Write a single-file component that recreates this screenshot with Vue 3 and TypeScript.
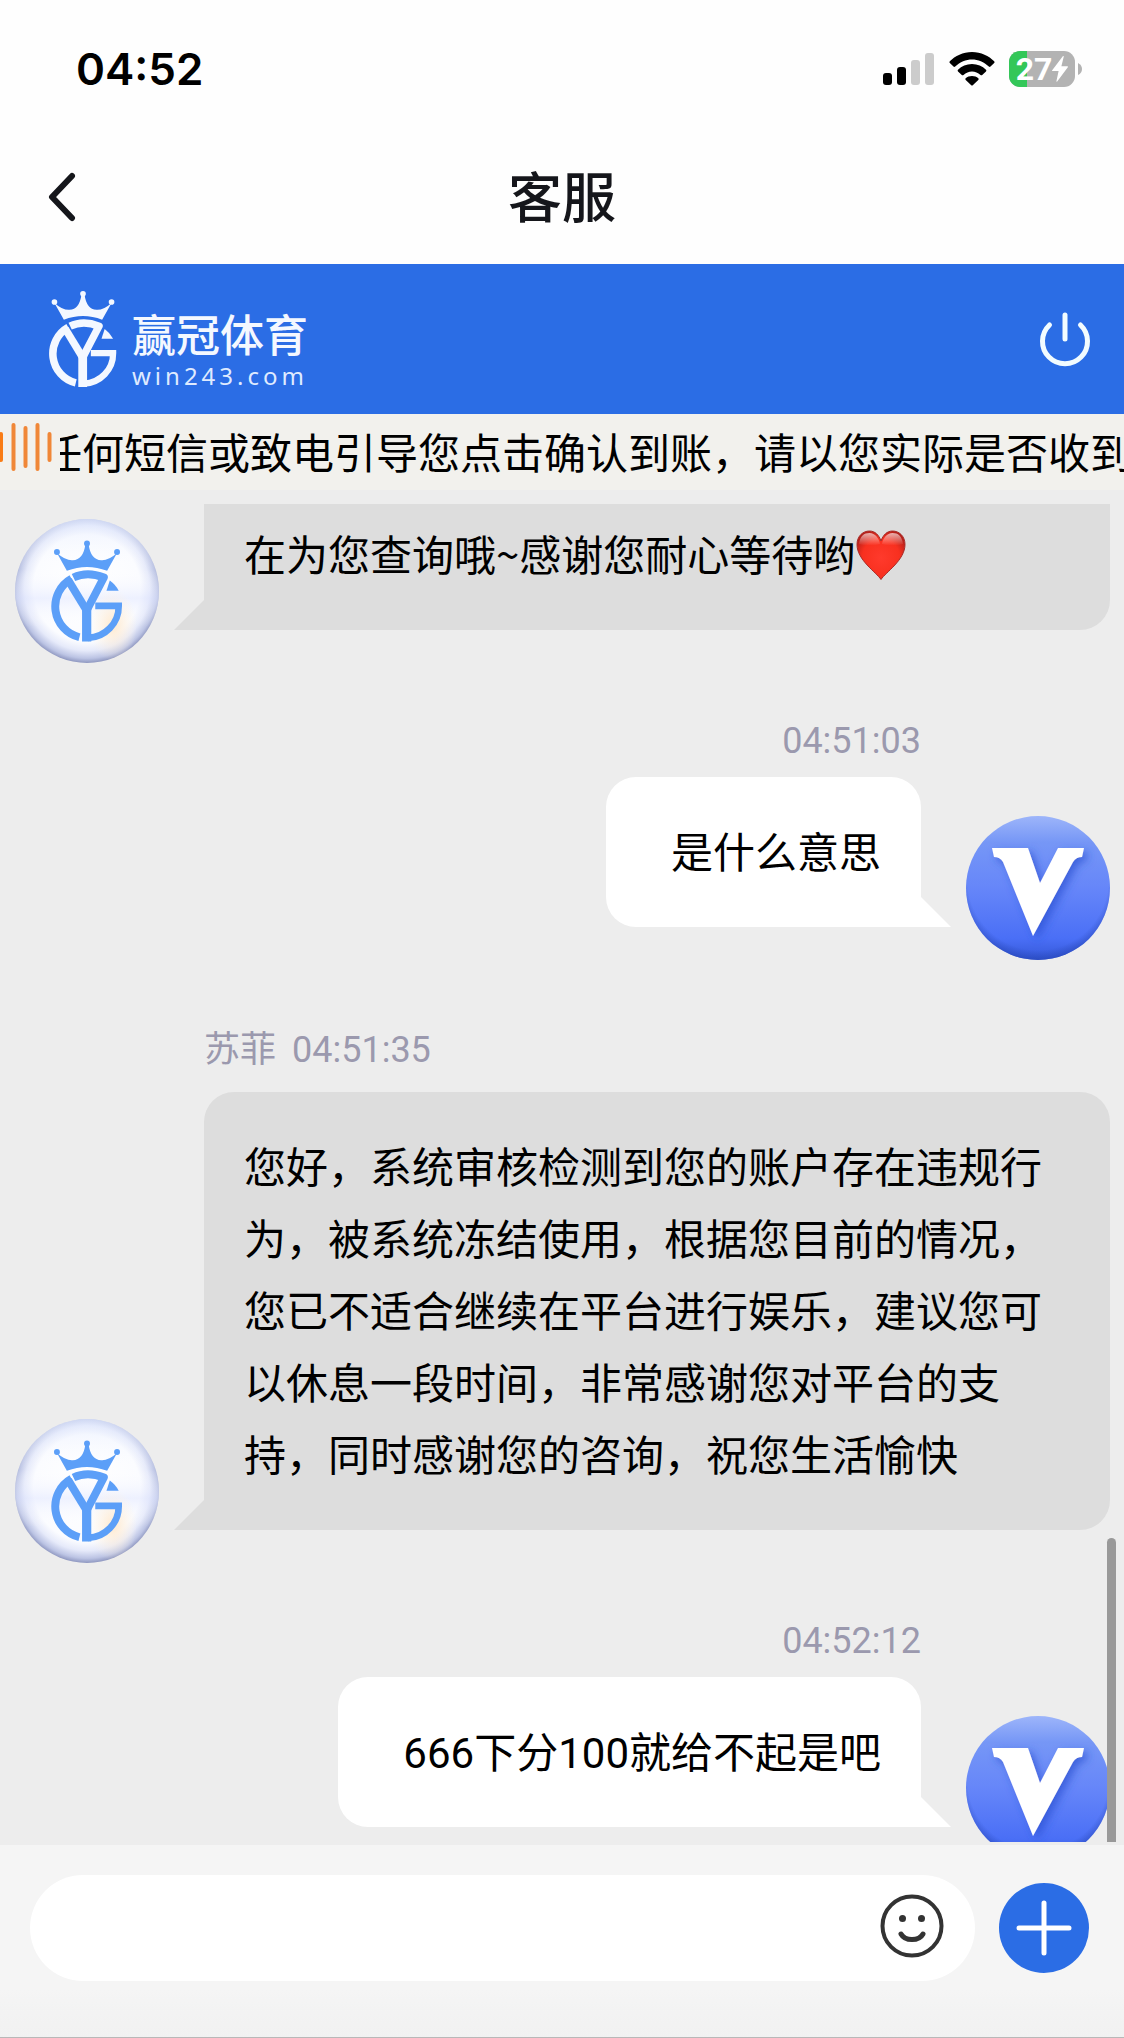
<script setup lang="ts">
import { ref } from 'vue'

interface Message {
  id: number
  from: 'agent' | 'me'
  name?: string
  time?: string
  text: string
  heart?: boolean
  continued?: boolean
}

const battery = 27
const draft = ref('')
const notice = '任何短信或致电引导您点击确认到账，请以您实际是否收到'

const messages: Message[] = [
  { id: 1, from: 'agent', text: '在为您查询哦~感谢您耐心等待哟', heart: true, continued: true },
  { id: 2, from: 'me', time: '04:51:03', text: '是什么意思' },
  {
    id: 3,
    from: 'agent',
    name: '苏菲',
    time: '04:51:35',
    text: '您好，系统审核检测到您的账户存在违规行为，被系统冻结使用，根据您目前的情况，您已不适合继续在平台进行娱乐，建议您可以休息一段时间，非常感谢您对平台的支持，同时感谢您的咨询，祝您生活愉快',
  },
  { id: 4, from: 'me', time: '04:52:12', text: '666下分100就给不起是吧' },
]
</script>

<template>
  <div class="app">
    <!-- Shared drawings -->
    <svg class="defs" aria-hidden="true">
      <symbol id="emblem" viewBox="0 0 218 306">
        <g fill="currentColor">
          <circle cx="18" cy="35" r="9" />
          <circle cx="109" cy="9" r="9" />
          <circle cx="200" cy="35" r="9" />
          <path d="M18 38Q45 62 66 60Q98 58 104 12H114Q120 58 152 60Q173 62 200 38L170 92Q109 68 48 92Z" />
          <path d="M178 121Q196 134 205 152H168Z" />
          <path d="M94 198H122V306H94Z" />
        </g>
        <g fill="none" stroke="currentColor" stroke-width="24">
          <path d="M62 116A96 96 0 0 0 86 293" />
          <path d="M112 295A96 96 0 0 0 205 198H134" stroke-width="20" />
          <path d="M52 120L108 212" />
          <path d="M68 112Q110 92 160 112L108 212" stroke-linejoin="round" />
        </g>
      </symbol>
    </svg>

    <header class="top">
      <div class="status">
        <time class="clock">04:52</time>
        <div class="status-icons">
          <svg width="52" height="36" viewBox="0 0 52 36" aria-hidden="true">
            <rect x="0" y="22" width="9" height="12" rx="3" />
            <rect x="14" y="16" width="9" height="18" rx="3" />
            <rect x="28" y="9" width="9" height="25" rx="3" fill="#ccc" />
            <rect x="42" y="2" width="9" height="32" rx="3" fill="#ccc" />
          </svg>
          <svg class="wifi" width="46" height="36" viewBox="0 0 46 36" aria-hidden="true">
            <path d="M23 1C14 1 6 5 .8 10.300Q0 11.200.8 12L4.500 15.600Q5.300 16.300 6.200 15.500C11 11 17 8.500 23 8.500S35 11 39.800 15.500Q40.700 16.300 41.500 15.600L45.200 12Q46 11.200 45.200 10.300C40 5 32 1 23 1Z" />
            <path d="M23 13C17.500 13 12.600 15.200 9 18.700Q8.200 19.500 9 20.400L12.800 24Q13.600 24.700 14.500 24C17 21.800 19.800 20.600 23 20.600S29 21.800 31.500 24Q32.400 24.700 33.200 24L37 20.400Q37.800 19.500 37 18.700C33.400 15.200 28.500 13 23 13Z" />
            <path d="M23 25C20.500 25 18.300 25.800 16.700 27.200Q15.800 28 16.700 28.900L22 34Q23 35 24 34L29.300 28.900Q30.200 28 29.300 27.200C27.700 25.800 25.500 25 23 25Z" />
          </svg>
          <div class="battery">
            <div class="battery-body">
              <div class="battery-fill" :style="{ width: battery + '%' }"></div>
              <span class="battery-text">{{ battery }}</span>
              <svg width="16" height="26" viewBox="0 0 16 26" aria-hidden="true">
                <path d="M11 0L0 14.500Q0 15 .6 15H6.600L4.400 25.300Q4.600 26 5.200 25.500L16 11Q16 10.300 15.400 10.300H9.400L11.800.6Q11.600-.2 11 0Z" fill="#fff" />
              </svg>
            </div>
            <svg width="4" height="12" viewBox="0 0 4 12" aria-hidden="true">
              <path d="M0 0Q4 2 4 6T0 12Z" fill="#b3b3b3" />
            </svg>
          </div>
        </div>
      </div>
      <nav class="nav">
        <button class="icon-button back" type="button" aria-label="返回">
          <svg width="30" height="50" viewBox="0 0 30 50" fill="none" stroke="#15161b" stroke-width="6" stroke-linecap="round" stroke-linejoin="round">
            <path d="M25 4L5 25L25 46" />
          </svg>
        </button>
        <h1 class="title">客服</h1>
      </nav>
    </header>

    <section class="brand">
      <a class="logo" href="#">
        <svg class="logo-mark" aria-hidden="true"><use href="#emblem" /></svg>
        <span class="logo-words">
          <span class="logo-name">赢冠体育</span>
          <span class="logo-domain">win243.com</span>
        </span>
      </a>
      <button class="icon-button" type="button" aria-label="退出">
        <svg width="52" height="56" viewBox="0 0 52 56" fill="none" stroke="#f2fcff" stroke-width="5" stroke-linecap="round">
          <path d="M26 4V28" />
          <path d="M10.500 14A22.500 22.500 0 1 0 41.500 14" />
        </svg>
      </button>
    </section>

    <div class="notice">
      <svg width="52" height="52" viewBox="0 0 52 52" fill="none" stroke="#f08738" stroke-width="4" stroke-linecap="round" aria-hidden="true">
        <path d="M1 14V40" stroke="#f97c16" />
        <path d="M13.500 5V49M25.500 8V46M37.500 5V49M49.500 14V40" />
      </svg>
      <p class="notice-text">{{ notice }}</p>
    </div>

    <main class="chat">
      <div class="list">
        <article
          v-for="m in messages"
          :key="m.id"
          class="message"
          :class="['message--' + m.from, { 'message--continued': m.continued }]"
        >
          <svg v-if="m.from === 'agent'" class="avatar avatar--agent" viewBox="0 0 144 144" role="img" aria-label="客服头像">
            <defs>
              <radialGradient id="pearl" cx="0.500" cy="0.480" r="0.530">
                <stop offset="0" stop-color="#fff" />
                <stop offset="0.700" stop-color="#fbfcff" />
                <stop offset="0.820" stop-color="#e6eafa" />
                <stop offset="0.920" stop-color="#bcc4e4" />
                <stop offset="1" stop-color="#7f88b4" />
              </radialGradient>
              <linearGradient id="pearl-top" x1="0" y1="0" x2="0" y2="1">
                <stop offset="0" stop-color="#dce6ff" stop-opacity="0.500" />
                <stop offset="0.350" stop-color="#fff" stop-opacity="0" />
                <stop offset="0.550" stop-color="#dfe5ff" stop-opacity="0.500" />
                <stop offset="0.750" stop-color="#fff" stop-opacity="0" />
              </linearGradient>
              <radialGradient id="pearl-warm">
                <stop offset="0" stop-color="#ffe9cf" />
                <stop offset="1" stop-color="#fff3e2" stop-opacity="0" />
              </radialGradient>
            </defs>
            <circle cx="72" cy="72" r="72" fill="url(#pearl)" />
            <circle cx="72" cy="72" r="72" fill="url(#pearl-top)" />
            <ellipse cx="98" cy="106" rx="24" ry="36" fill="url(#pearl-warm)" />
            <use href="#emblem" x="36" y="21" width="72" height="102" />
          </svg>

          <div class="content">
            <p v-if="m.time" class="meta">
              <span v-if="m.name">{{ m.name }}</span>
              <time>{{ m.time }}</time>
            </p>
            <div class="bubble">
              <p class="bubble-text">
                {{ m.text }}<svg v-if="m.heart" class="heart" viewBox="0 0 52 52" role="img" aria-label="爱心">
                  <defs>
                    <radialGradient id="heart-red" cx="0.500" cy="0.550" r="0.600">
                      <stop offset="0" stop-color="#ff3a2c" />
                      <stop offset="0.650" stop-color="#f8301f" />
                      <stop offset="1" stop-color="#b5201a" />
                    </radialGradient>
                    <linearGradient id="heart-shine" x1="0" y1="0" x2="0" y2="1">
                      <stop offset="0" stop-color="#fff" stop-opacity="0.650" />
                      <stop offset="1" stop-color="#fff" stop-opacity="0" />
                    </linearGradient>
                  </defs>
                  <path d="M26 50.500C21 43 2 31 2 15.500C2 7 8 2 14.500 2C20 2 24 6 26 12C28 6 32 2 37.500 2C44 2 50 7 50 15.500C50 31 31 43 26 50.500Z" fill="url(#heart-red)" stroke="#a92a26" stroke-width="1" />
                  <path d="M4 15C5 7 9 4 14.500 4S24 9 25 15Q14 18 4 15ZM27 15C28 9 32 4 37.500 4S47 7 48 15Q38 18 27 15Z" fill="url(#heart-shine)" />
                </svg>
              </p>
            </div>
          </div>

          <svg v-if="m.from === 'me'" class="avatar" viewBox="0 0 144 144" role="img" aria-label="我的头像">
            <defs>
              <linearGradient id="badge" x1="0" y1="0" x2="0" y2="1">
                <stop offset="0" stop-color="#9db5fa" />
                <stop offset="0.180" stop-color="#7697f6" />
                <stop offset="0.500" stop-color="#6686f9" />
                <stop offset="0.850" stop-color="#4a6ff6" />
                <stop offset="1" stop-color="#3457d8" />
              </linearGradient>
              <radialGradient id="badge-rim" cx="0.500" cy="0.440" r="0.570">
                <stop offset="0.860" stop-color="#2a49b8" stop-opacity="0" />
                <stop offset="1" stop-color="#2444b4" stop-opacity="0.700" />
              </radialGradient>
              <filter id="badge-shadow" x="-30%" y="-30%" width="160%" height="160%">
                <feDropShadow dx="4" dy="4" stdDeviation="4" flood-color="#2b4fd0" flood-opacity="0.700" />
              </filter>
            </defs>
            <circle cx="72" cy="72" r="72" fill="url(#badge)" />
            <circle cx="72" cy="72" r="72" fill="url(#badge-rim)" />
            <path d="M26 32H62L74 67L92 32H118L116 41Q110 41 107 46L67 120L37 46Q34 41 28 41Z" fill="#fff" filter="url(#badge-shadow)" />
          </svg>
        </article>
      </div>
      <div class="scroll-thumb"></div>
    </main>

    <form class="composer" @submit.prevent>
      <div class="field">
        <input v-model="draft" class="field-input" type="text" aria-label="输入消息" />
        <button class="icon-button" type="button" aria-label="表情">
          <svg width="64" height="64" viewBox="0 0 64 64" fill="none" stroke="#333" stroke-width="4" stroke-linecap="round">
            <circle cx="32" cy="32" r="29.500" />
            <path d="M21 40Q24 45.500 32 45.500T43 40" stroke-width="5" />
            <circle cx="22.500" cy="24.500" r="3.500" fill="#333" stroke="none" />
            <circle cx="41.500" cy="24.500" r="3.500" fill="#333" stroke="none" />
          </svg>
        </button>
      </div>
      <button class="plus" type="button" aria-label="更多">
        <svg width="56" height="56" viewBox="0 0 56 56" fill="none" stroke="#fff" stroke-width="5" stroke-linecap="round">
          <path d="M28 3V53M3 28H53" />
        </svg>
      </button>
    </form>
  </div>
</template>

<style>
body {
  margin: 0;
}
</style>

<style scoped>
.app {
  display: flex;
  flex-direction: column;
  height: 100vh;
  overflow: hidden;
  background: #ededed;
  color: #000;
  font-family: Roboto, "Noto Sans CJK SC", sans-serif;
}

p,
h1 {
  margin: 0;
}

svg {
  display: block;
  flex: none;
}

.defs {
  position: absolute;
  width: 0;
  height: 0;
}

.icon-button {
  display: flex;
  padding: 0;
  border: 0;
  background: none;
}

.top {
  flex: none;
  background: #fefefe;
}

.status {
  display: flex;
  align-items: center;
  justify-content: space-between;
  height: 138px;
  padding: 0 42px 0 76px;
}

.clock {
  font-family: Inter, sans-serif;
  font-size: 44px;
  font-weight: 600;
}

.status-icons {
  display: flex;
  align-items: center;
  gap: 14px;
}

.battery {
  display: flex;
  align-items: center;
  gap: 3px;
}

.battery-body {
  position: relative;
  display: flex;
  align-items: center;
  justify-content: center;
  width: 66px;
  height: 36px;
  border-radius: 11px;
  background: #b3b3b3;
  overflow: hidden;
}

.battery-fill {
  position: absolute;
  inset: 0 auto 0 0;
  background: #34c759;
}

.battery-text {
  position: relative;
  color: #fff;
  font-size: 32px;
  font-weight: 700;
  line-height: 36px;
}

.battery-body svg {
  position: relative;
}

.nav {
  display: grid;
  grid-template-columns: 1fr auto 1fr;
  align-items: center;
  height: 118px;
  padding: 0 47px 8px;
}

.title {
  padding-top: 6px;
  font-size: 54px;
  font-weight: 500;
  line-height: 78px;
  color: #15161b;
}

.brand {
  display: flex;
  flex: none;
  align-items: center;
  justify-content: space-between;
  height: 150px;
  padding: 0 33px 0 48px;
  background: #2b6de5;
}

.logo {
  display: flex;
  align-items: center;
  gap: 14px;
  color: #f4f8ff;
  text-decoration: none;
}

.logo-mark {
  width: 70px;
  height: 96px;
}

.logo-words {
  display: flex;
  flex-direction: column;
  padding-top: 26px;
}

.logo-name {
  font-size: 44px;
  font-weight: 500;
  line-height: 48px;
}

.logo-domain {
  font-family: "Noto Sans", sans-serif;
  font-size: 24px;
  line-height: 30px;
  letter-spacing: 4px;
  color: #dfeaff;
}

.notice {
  display: flex;
  flex: none;
  align-items: flex-start;
  gap: 8px;
  height: 76px;
  padding-top: 6px;
  box-sizing: border-box;
  background: #f2f1ed;
}

.notice-text {
  flex: 1;
  overflow: hidden;
  font-size: 42px;
  line-height: 70px;
  text-indent: -20px;
  white-space: nowrap;
}

.chat {
  position: relative;
  display: flex;
  flex: 1;
  min-height: 0;
  padding: 14px 0 3px;
}

.list {
  flex: 1;
  overflow: hidden;
}

.message {
  display: flex;
  align-items: flex-end;
  padding: 0 14px 0 15px;
}

.message--me {
  justify-content: flex-end;
}

.avatar {
  width: 144px;
  height: 144px;
}

.avatar--agent {
  color: #5c9ff8;
}

.content {
  margin-bottom: 33px;
}

.message--agent .content {
  flex: 1;
  margin-left: 45px;
}

.message--me .content {
  margin-right: 45px;
}

.meta {
  display: flex;
  gap: 16px;
  font-size: 36px;
  line-height: 48px;
  color: #9b99ae;
}

.message--agent .meta {
  padding: 66px 0 18px;
}

.message--me .meta {
  justify-content: flex-end;
  padding: 54px 0 12px;
}

.bubble {
  position: relative;
  padding: 37px 40px 41px;
  border-radius: 30px 30px 30px 0;
  background: #ddd;
  font-family: "Noto Sans CJK SC", sans-serif;
}

.bubble::after {
  content: "";
  position: absolute;
  right: 100%;
  bottom: 0;
  width: 30px;
  height: 30px;
  background: inherit;
  clip-path: polygon(100% 0, 100% 100%, 0 100%);
}

.message--me .bubble {
  padding: 41px 40px 37px 65px;
  border-radius: 30px 30px 0 30px;
  background: #fff;
  font-family: Roboto, "Noto Sans CJK SC", sans-serif;
}

.message--me .bubble::after {
  right: auto;
  left: 100%;
  clip-path: polygon(0 0, 100% 100%, 0 100%);
}

.message--continued .bubble {
  padding-top: 13px;
  border-radius: 0 0 30px 0;
}

.bubble-text {
  font-size: 42px;
  line-height: 72px;
}

.heart {
  display: inline-block;
  width: 52px;
  height: 52px;
  vertical-align: -10px;
}

.scroll-thumb {
  position: absolute;
  right: 8px;
  bottom: 3px;
  width: 9px;
  height: 304px;
  border-radius: 5px 5px 0 0;
  background: #999;
}

.composer {
  display: flex;
  flex: none;
  align-items: center;
  gap: 24px;
  padding: 30px 35px 56px 30px;
  border-bottom: 1px solid #b8b8b8;
  background: linear-gradient(#f5f5f5 75%, #f1f1f1);
}

.field {
  display: flex;
  flex: 1;
  align-items: center;
  height: 106px;
  padding: 0 31px 4px 40px;
  box-sizing: border-box;
  border-radius: 53px;
  background: #fff;
}

.field-input {
  flex: 1;
  min-width: 0;
  height: 72px;
  padding: 0;
  border: 0;
  outline: 0;
  background: none;
  font: inherit;
  font-size: 42px;
}

.plus {
  display: flex;
  align-items: center;
  justify-content: center;
  width: 90px;
  height: 90px;
  padding: 0;
  border: 0;
  border-radius: 50%;
  background: #2b6de5;
}
</style>
